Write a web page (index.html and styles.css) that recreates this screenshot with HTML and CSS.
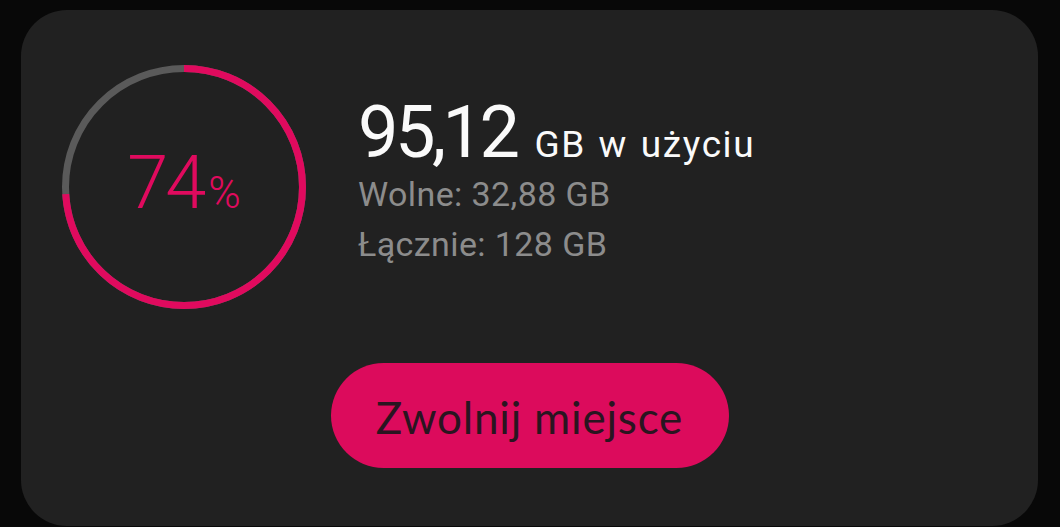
FILE: index.html
```html
<!DOCTYPE html>
<html lang="pl">
  <head>
    <meta charset="UTF-8" />
    <meta name="viewport" content="width=device-width, initial-scale=1.0" />
    <title>Pamięć</title>
    <link rel="stylesheet" href="styles.css">
  </head>
  <body>
    <div class="storage-card">
      <div class="storage-top">
        <div class="gauge">
          <svg class="gauge-ring" viewBox="0 0 244 244" width="244" height="244">
            <circle class="ring-track" cx="122" cy="122" r="118.5" />
            <circle class="ring-used" cx="122" cy="122" r="118.5"
              stroke-dasharray="551 744.6" transform="rotate(-90 122 122)" />
          </svg>
          <div class="gauge-label">74<span class="gauge-pct">%</span></div>
        </div>

        <div class="storage-info">
          <div class="used">
            <span class="used-value">95,12</span>
            <span class="used-unit">GB w użyciu</span>
          </div>
          <div class="info-line">Wolne: 32,88 GB</div>
          <div class="info-line">Łącznie: 128 GB</div>
        </div>
      </div>

      <button type="button" class="btn-free">Zwolnij miejsce</button>
    </div>
  </body>
</html>
```

FILE: styles.css
```css
:root {
  --bg: #080808;
  --card: #212121;
  --pink: #e00a5e;
  --button-pink: #dc0b5c;
  --track: #5a5a5a;
  --white: #fafafa;
  --muted: #8c8c8c;
}

* {
  margin: 0;
  padding: 0;
  box-sizing: border-box;
}

body {
  background-color: var(--bg);
  font-family: Roboto, "Noto Sans", sans-serif;
  padding: 10px 22px 0 21px;
}

.storage-card {
  background-color: var(--card);
  border-radius: 46px;
  height: 516px;
  padding: 55px 41px 0;
  display: flex;
  flex-direction: column;
  align-items: center;
}

.storage-top {
  display: flex;
  align-items: flex-start;
  gap: 52px;
  width: 100%;
}

.gauge {
  position: relative;
  width: 244px;
  height: 244px;
  flex-shrink: 0;
  display: flex;
  align-items: center;
  justify-content: center;
}

.gauge-ring {
  position: absolute;
  top: 0;
  left: 0;
}

.ring-track,
.ring-used {
  fill: none;
  stroke-width: 7;
}

.ring-track {
  stroke: var(--track);
}

.ring-used {
  stroke: var(--pink);
}

.gauge-label {
  position: relative;
  color: var(--pink);
  font-weight: 300;
  font-size: 74px;
  line-height: 74px;
  letter-spacing: -3px;
  padding-top: 2px;
}

.gauge-pct {
  font-size: 44px;
  letter-spacing: 0;
  margin-left: 5px;
}

.storage-info {
  margin-top: 32px;
}

.used {
  color: var(--white);
  font-size: 72px;
  line-height: 72px;
  white-space: nowrap;
}

.used-value {
  letter-spacing: -3.5px;
}

.used-unit {
  font-size: 37px;
  line-height: 1;
  letter-spacing: 1.6px;
  word-spacing: 2px;
}

.info-line {
  color: var(--muted);
  font-size: 34px;
  line-height: 50px;
  letter-spacing: 0.4px;
}

.btn-free {
  margin-top: 54px;
  width: 398px;
  height: 105px;
  border: none;
  border-radius: 53px;
  background-color: var(--button-pink);
  color: #2a1520;
  font-family: Lato, "Noto Sans", sans-serif;
  font-size: 44px;
  letter-spacing: 0.8px;
  padding-top: 2px;
  cursor: pointer;
}
```
